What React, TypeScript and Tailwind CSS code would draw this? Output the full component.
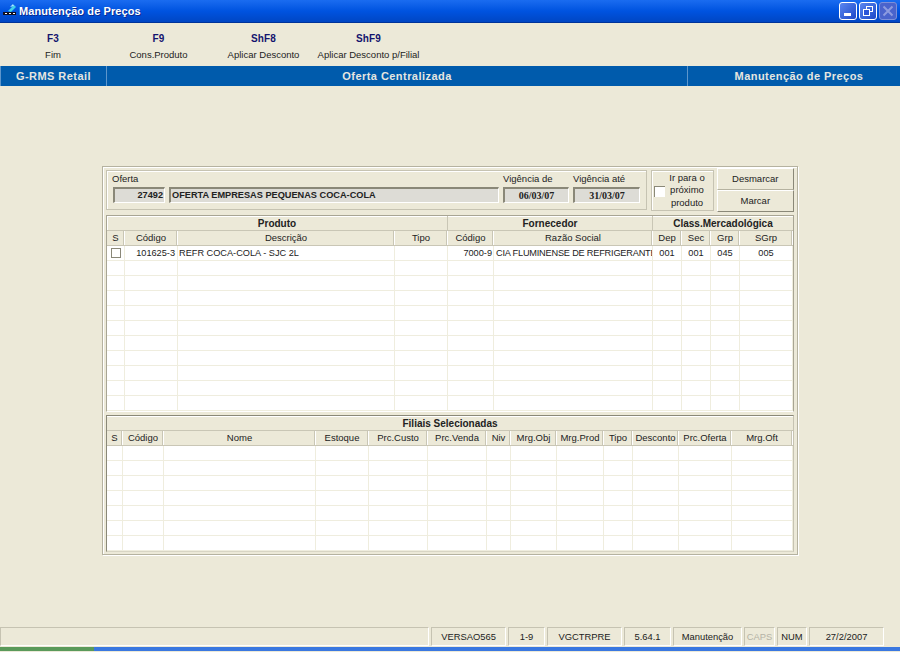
import React from "react";

const sans = "font-['Liberation_Sans',Arial,sans-serif]";
const headG1 = ["S", "Código", "Descrição", "Tipo", "Código", "Razão Social", "Dep", "Sec", "Grp", "SGrp"];
const headG2 = ["S", "Código", "Nome", "Estoque", "Prc.Custo", "Prc.Venda", "Niv", "Mrg.Obj", "Mrg.Prod", "Tipo", "Desconto", "Prc.Oferta", "Mrg.Oft"];
const cols1 = "grid grid-cols-[18px_53px_217px_53px_46px_159px_29px_29px_29px_53px]";
const cols2 = "grid grid-cols-[16px_41px_152px_53px_59px_59px_24px_46px_47px_29px_46px_53px_61px]";

function Shortcut({ k, label, w }: { k: string; label: string; w: string }) {
  return (
    <div className={`${w} flex flex-col items-center`}>
      <div className="h-[16px] text-[10px] leading-[16px] font-bold text-[#14146e] tracking-[0.2px]">{k}</div>
      <div className="mt-[1px] h-[14px] text-[9.5px] leading-[14px] text-[#222] whitespace-nowrap">{label}</div>
    </div>
  );
}

function Head({ children }: { children?: React.ReactNode }) {
  return (
    <div className="h-[14px] flex items-center justify-center bg-[#ece9d8] border-r border-[#fff] shadow-[inset_-1px_0_0_#c9c6b5] text-[9.5px] leading-[14px] text-[#222] whitespace-nowrap overflow-hidden">
      {children}
    </div>
  );
}

function Cell({ children, align = "" }: { children?: React.ReactNode; align?: string }) {
  return (
    <div className={`h-[15px] border-r border-b border-[#efedde] bg-white flex items-center text-[9.2px] leading-[14px] text-[#222] whitespace-nowrap overflow-hidden ${align}`}>
      {children}
    </div>
  );
}

function Field({ children, cls }: { children: React.ReactNode; cls: string }) {
  return (
    <div className={`h-[16px] bg-[#dddcd6] border-t-2 border-l-2 border-t-[#8a8878] border-l-[#8a8878] border-r border-b border-r-white border-b-white flex items-center font-bold text-[#222] whitespace-nowrap overflow-hidden ${cls}`}>
      {children}
    </div>
  );
}

function StatusPanel({ w, children, muted }: { w: string; children?: React.ReactNode; muted?: boolean }) {
  return (
    <div className={`${w} h-[19px] pt-[1px] flex items-center justify-center border-t border-l border-[#c6c3b2] border-r border-r-white border-b border-b-white text-[9.4px] whitespace-nowrap ${muted ? "text-[#b5b3a6]" : "text-[#222]"}`}>
      {children}
    </div>
  );
}

function WinBtn({ children, disabled }: { children: React.ReactNode; disabled?: boolean }) {
  return (
    <div className={`w-[18px] h-[18px] rounded-[3px] border flex items-center justify-center ${disabled ? "border-[#7d8fd8] bg-[#4a63cc]" : "border-white bg-gradient-to-br from-[#5b86f0] to-[#1c47c8]"}`}>
      {children}
    </div>
  );
}

export default function App() {
  return (
    <div className={`${sans} w-[900px] h-[652px] overflow-hidden bg-[#ece9d8] flex flex-col antialiased`}>
      {/* Title bar */}
      <div className="h-[23px] shrink-0 flex items-center bg-gradient-to-b from-[#1a6cf0] via-[#0053e0] to-[#0046c4] border-b border-[#003399] pl-[2px] pr-[3px]">
        <svg width="16" height="16" viewBox="0 0 16 16" className="shrink-0">
          <path d="M6 8 L12 2 L14 4 L9 9 Z" fill="#3fd0e8" />
          <path d="M8 4 L11 1 L12 3 Z" fill="#aef0ff" />
          <rect x="1" y="9" width="13" height="3" fill="#101020" />
          <rect x="3" y="10" width="2" height="1" fill="#fff" />
          <rect x="7" y="10" width="2" height="1" fill="#fff" />
          <rect x="11" y="10" width="2" height="1" fill="#fff" />
        </svg>
        <div className="ml-[1px] text-[11px] font-bold text-white tracking-[0.1px] [text-shadow:1px_1px_0_#0a2a90]">Manutenção de Preços</div>
        <div className="ml-auto flex gap-[2px]">
          <WinBtn>
            <div className="w-[7px] h-[3px] bg-white mt-[7px] -ml-[2px]" />
          </WinBtn>
          <WinBtn>
            <svg width="12" height="12" viewBox="0 0 12 12" fill="none" stroke="#fff">
              <rect x="4.5" y="1.5" width="6" height="5" />
              <rect x="1.5" y="4.5" width="6" height="6" fill="#2a55d8" />
            </svg>
          </WinBtn>
          <WinBtn disabled>
            <svg width="12" height="12" viewBox="0 0 12 12" stroke="#8d9be0" strokeWidth="2">
              <path d="M1.5 1.5 L10.5 10.5 M10.5 1.5 L1.5 10.5" />
            </svg>
          </WinBtn>
        </div>
      </div>

      {/* Toolbar */}
      <div className="h-[43px] shrink-0 pt-[8px] flex">
        <Shortcut w="w-[106px]" k="F3" label="Fim" />
        <Shortcut w="w-[105px]" k="F9" label="Cons.Produto" />
        <Shortcut w="w-[105px]" k="ShF8" label="Aplicar Desconto" />
        <Shortcut w="w-[105px]" k="ShF9" label="Aplicar Desconto p/Filial" />
      </div>

      {/* Blue band */}
      <div className="h-[20px] shrink-0 bg-[#005bac] flex text-[11px] font-bold text-[#e6e6e0] tracking-[0.45px]">
        <div className="w-[107px] flex items-center justify-center border-x border-[#5d96cc]">G-RMS Retail</div>
        <div className="w-[580px] flex items-center justify-center">Oferta Centralizada</div>
        <div className="flex-1 flex items-center justify-center border-l border-[#5d96cc] pl-[10px]">Manutenção de Preços</div>
      </div>

      {/* Main panel */}
      <div className="mt-[80px] ml-[102px] w-[696px] h-[389px] border border-[#b5b2a0] shadow-[inset_1px_1px_0_#fff,1px_1px_0_#fff] px-[3px] pt-[1px]">
        {/* Top row */}
        <div className="flex items-start h-[46px]">
          <div className="mt-[2px] w-[541px] h-[40px] border border-[#c6c3b2] shadow-[inset_1px_1px_0_#fff] flex px-[6px] pt-[1px]">
            <div className="flex flex-col">
              <div className="h-[14px] -ml-[1px] text-[9.5px] leading-[14px] text-[#222]">Oferta</div>
              <div className="flex gap-[4px] mt-[1px]">
                <Field cls="w-[52px] justify-end pr-[1px] text-[9.2px]">27492</Field>
                <Field cls="w-[330px] pl-[1px] text-[9.2px]">OFERTA EMPRESAS PEQUENAS COCA-COLA</Field>
              </div>
            </div>
            <div className="ml-[4px] w-[70px] flex flex-col">
              <div className="h-[14px] text-[9.5px] leading-[14px] text-[#222]">Vigência de</div>
              <Field cls="mt-[1px] w-[66px] justify-center font-['Liberation_Serif',serif] text-[10px]">06/03/07</Field>
            </div>
            <div className="w-[67px] flex flex-col">
              <div className="h-[14px] text-[9.5px] leading-[14px] text-[#222]">Vigência até</div>
              <Field cls="mt-[1px] w-[67px] justify-center font-['Liberation_Serif',serif] text-[10px]">31/03/07</Field>
            </div>
          </div>
          <div className="ml-[4px] mt-[2px] w-[63px] h-[41px] border border-[#c6c3b2] shadow-[inset_1px_1px_0_#fff] flex items-center pl-[2px]">
            <div className="w-[11px] h-[11px] mt-[1px] bg-white border-t border-l border-[#8a8878] shrink-0" />
            <div className="w-[44px] text-center text-[9.5px] leading-[12.5px] text-[#222]">Ir para o próximo produto</div>
          </div>
          <div className="ml-[3px] w-[78px] h-[44px] flex flex-col">
            <div className="h-[22px] flex items-center justify-center border border-t-white border-l-white border-r-[#8a8878] border-b-[#b5b2a0] text-[9.5px] text-[#222]">Desmarcar</div>
            <div className="h-[22px] flex items-center justify-center border border-t-white border-l-white border-r-[#8a8878] border-b-[#8a8878] text-[9.5px] text-[#222]">Marcar</div>
          </div>
        </div>

        {/* Product grid */}
        <div className="mt-[1px] w-[688px] h-[197px] border border-[#a8a594] border-b-white shadow-[inset_1px_1px_0_#fff]">
          <div className="h-[15px] flex text-[10px] font-bold text-[#222] border-b border-[#c9c6b5]">
            <div className="w-[341px] flex items-center justify-center border-r border-[#c9c6b5]">Produto</div>
            <div className="w-[205px] flex items-center justify-center border-r border-[#c9c6b5]">Fornecedor</div>
            <div className="flex-1 flex items-center justify-center">Class.Mercadológica</div>
          </div>
          <div className={`${cols1} border-b border-[#c9c6b5]`}>
            {headG1.map((h, i) => <Head key={i}>{h}</Head>)}
          </div>
          <div className={cols1}>
            <Cell align="justify-center">
              <div className="w-[10px] h-[10px] border border-[#8a8878] bg-white" />
            </Cell>
            <Cell align="justify-end pr-[2px]">101625-3</Cell>
            <Cell align="pl-[1px]">REFR COCA-COLA - SJC 2L</Cell>
            <Cell />
            <Cell align="justify-end pr-[1px]">7000-9</Cell>
            <Cell align="pl-[2px] tracking-[-0.2px]">CIA FLUMINENSE DE REFRIGERANTE</Cell>
            <Cell align="justify-center">001</Cell>
            <Cell align="justify-center">001</Cell>
            <Cell align="justify-center">045</Cell>
            <Cell align="justify-center">005</Cell>
            {Array.from({ length: 100 }).map((_, i) => <Cell key={i} />)}
          </div>
        </div>

        {/* Filiais grid */}
        <div className="mt-[3px] w-[688px] h-[137px] border border-[#8a8878] border-r-[#c6c3b2] border-b-[#d8d5c4]">
          <div className="h-[15px] flex items-center justify-center text-[10px] font-bold text-[#222] border-b border-[#c9c6b5] shadow-[inset_0_1px_0_#fff]">Filiais Selecionadas</div>
          <div className={`${cols2} border-b border-[#c9c6b5]`}>
            {headG2.map((h, i) => <Head key={i}>{h}</Head>)}
          </div>
          <div className={cols2}>
            {Array.from({ length: 91 }).map((_, i) => <Cell key={i} />)}
          </div>
        </div>
      </div>

      {/* Status bar */}
      <div className="mt-[72px] h-[20px] flex shrink-0 gap-[2px]">
        <StatusPanel w="w-[429px]" />
        <StatusPanel w="w-[75px]">VERSAO565</StatusPanel>
        <StatusPanel w="w-[37px]">1-9</StatusPanel>
        <StatusPanel w="w-[75px]">VGCTRPRE</StatusPanel>
        <StatusPanel w="w-[47px]">5.64.1</StatusPanel>
        <StatusPanel w="w-[69px]">Manutenção</StatusPanel>
        <StatusPanel w="w-[31px]" muted>CAPS</StatusPanel>
        <StatusPanel w="w-[30px]">NUM</StatusPanel>
        <StatusPanel w="w-[75px]">27/2/2007</StatusPanel>
      </div>
      <div className="h-[4px] flex shrink-0">
        <div className="w-[94px] bg-[#5a9a5a]" />
        <div className="flex-1 bg-[#3a78e0]" />
      </div>
    </div>
  );
}
